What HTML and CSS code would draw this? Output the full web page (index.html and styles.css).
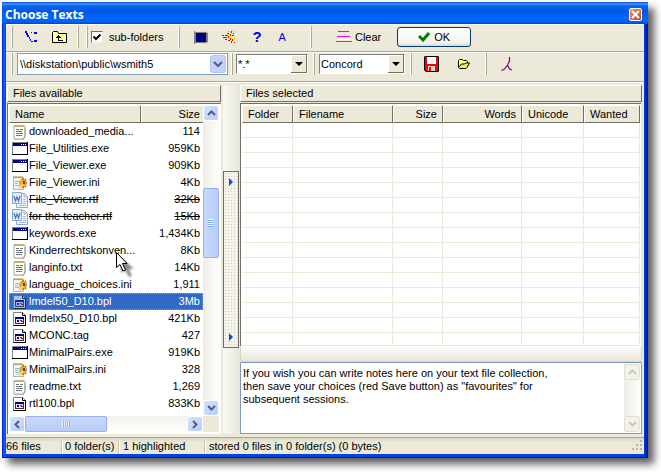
FILE: index.html
```html
<!DOCTYPE html>
<html lang="en">
<head>
    <meta charset="UTF-8">
    <title>Choose Texts</title>
    <link rel="stylesheet" href="styles.css">
</head>
<body>
<!-- shared icons -->
<svg class="defs" aria-hidden="true">
    <symbol id="i-txt" viewBox="0 0 16 16">
        <path d="M2 2h11v10l-2 3H2z" fill="#fffff4" stroke="#a8a89c"/>
        <path d="M13 4v9l-2 3H3" fill="none" stroke="#a8a08c"/>
        <path d="M3 1v2M5 1v2M7 1v2M9 1v2M11 1v2" stroke="#c08a10"/>
        <path d="M4 5.500h3M8 5.500h3M4 7.500h6M4 9.500h7M4 11.500h6" stroke="#6c7884"/>
    </symbol>
    <symbol id="i-ini" viewBox="0 0 16 16">
        <path d="M1.500 2.500h10v12h-10z" fill="#eef8fc" stroke="#a0b8c0"/>
        <path d="M2 1v2M4 1v2M6 1v2M8 1v2M10 1v2" stroke="#c08a10"/>
        <path d="M3 6.500h4M3 8.500h3M3 10.500h4" stroke="#80c0d8"/>
        <circle cx="11" cy="8" r="4" fill="#f0a828"/>
        <path d="M11 3v2M15 8h-1M11 13v-2M13 5l1-1M13 11l1 1" stroke="#c88010" stroke-width="2"/>
        <path d="M6 12l5-4 1 2-4 4z" fill="#f8d070"/>
        <path d="M11 6h2v3h-2z" fill="#384878"/>
    </symbol>
    <symbol id="i-exe" viewBox="0 0 16 16">
        <path d="M0 1h16v13H0z" fill="#848484"/>
        <path d="M1 2h14v11H1z" fill="#fff"/>
        <path d="M1 2h14v3H1z" fill="#000084"/>
        <path d="M9 3h1v1H9zM11 3h1v1h-1zM13 3h1v1h-1z" fill="#fff"/>
        <path d="M15 1h1v13H0v-1h15z" fill="#000"/>
    </symbol>
    <symbol id="i-rtf" viewBox="0 0 16 16">
        <path d="M4.500 1.500h8l3 3v11h-11z" fill="#f4f8ff" stroke="#90a8d0"/>
        <path d="M12 2v3h3" fill="none" stroke="#90a8d0"/>
        <path d="M11 7.500h3M11 9.500h3M11 11.500h3M7 13.500h7" stroke="#a0b8dc"/>
        <path d="M.5.500h9v11h-9z" fill="#e4eefc" stroke="#88a4d0"/>
        <path d="M2 4l1.500 5L5 5l1.500 4L8 4" fill="none" stroke="#4878b8" stroke-width="1.200"/>
    </symbol>
    <symbol id="i-bpl" viewBox="0 0 16 16">
        <path d="M1.500 1.500h9l3 3v10h-12z" fill="#fff" stroke="#808080"/>
        <path d="M10.500 1.500v3h3v10h-12" fill="none" stroke="#000"/>
        <path d="M3 6h9v7H3z" fill="#303030"/>
        <path d="M4 8h7v4H4z" fill="#e8e8e8"/>
        <path d="M3 6h9v2H3z" fill="#000084"/>
        <path d="M5 9h2v2H5z" fill="#0000f0"/>
        <path d="M8 9h2v1H8zM9 10h2v1H9z" fill="#e00000"/>
    </symbol>
    <symbol id="i-up" viewBox="0 0 9 6"><path d="M1 5l3.500-3.500L8 5" fill="none" stroke="currentColor" stroke-width="2"/></symbol>
    <symbol id="i-down" viewBox="0 0 9 6"><path d="M1 1l3.500 3.500L8 1" fill="none" stroke="currentColor" stroke-width="2"/></symbol>
    <symbol id="i-left" viewBox="0 0 6 9"><path d="M5 1L1.500 4.500 5 8" fill="none" stroke="currentColor" stroke-width="2"/></symbol>
    <symbol id="i-right" viewBox="0 0 6 9"><path d="M1 1l3.500 3.500L1 8" fill="none" stroke="currentColor" stroke-width="2"/></symbol>
    <symbol id="i-play" viewBox="0 0 4 8"><path d="M0 0l4 4-4 4z" fill="#0050e8"/></symbol>
</svg>

<div class="window">
    <div class="titlebar">
        <h1>Choose Texts</h1>
        <button class="close" aria-label="Close">
            <svg width="9" height="9" viewBox="0 0 9 9"><path d="M1 1l7 7M8 1L1 8" stroke="#fff" stroke-width="2"/></svg>
        </button>
    </div>

    <div class="client">
        <div class="toolbar top">
            <span class="sep"></span>
            <button class="tool drive" aria-label="Drives">
                <svg width="12" height="12" viewBox="0 0 12 12"><path d="M0 0h2v2H0zM1 2h2v2H1zM2 4h2v2H2zM4 6h1v2H4zM5 8h1v2H5zM6 10h2v1H6zM6 1h1v1H6zM9 1h3v2H9zM9 9h3v2H9z" fill="#0000ff"/></svg>
            </button>
            <button class="tool up" aria-label="Up one level">
                <svg width="16" height="14" viewBox="0 0 16 14"><path d="M.5 12.500v-10l1-1h4l1 2h8v9z" fill="#ffff99" stroke="#000"/><path d="M6 5h1v1h1v1h1v1H7v2h4v1H6V8H4V7h1V6h1z" fill="#000"/></svg>
            </button>
            <span class="sep"></span>
            <span class="sep second"></span>
            <label class="check"><input type="checkbox" checked>sub-folders</label>
            <span class="sep"></span>
            <button class="tool screen" aria-label="View">
                <svg width="14" height="13" viewBox="0 0 14 13"><path d="M0 0h14v13H0z" fill="#808080"/><path d="M1 0h13v1H1zM1 12h13v1H1zM13 0h1v2h-1zM13 11h1v2h-1z" fill="#ffff00"/><path d="M2 2h10v9H2z" fill="#000084"/></svg>
            </button>
            <button class="tool zap" aria-label="Stop">
                <svg width="14" height="14" viewBox="0 0 14 14"><path d="M6 4h4v3h2v3H8V8H6z" fill="#ffff00"/><path d="M0 5h2v1H0zM3 5h3v1H3zM5 3h2v1H5zM9 1h1v2H9zM11 3h1v1h-1zM1 7h4v1H1zM6 6h1v2H6zM3 9h2v1H3zM6 10h2v1H6zM8 8h1v2H8zM10 9h1v2h-1zM12 12h1v1h-1zM8 4h1v2H8zM10 5h2v1h-2zM9 11h1v2H9z" fill="#f00000"/><path d="M6 1h2v1H6zM11 1h1v1h-1zM12 7h1v3h-1z" fill="#e8d000"/></svg>
            </button>
            <button class="tool help" aria-label="Help">?</button>
            <button class="tool font" aria-label="Font">A</button>
            <span class="sep"></span>
            <button class="tool clear">
                <svg width="16" height="12" viewBox="0 0 16 12"><path d="M2 0h11v1H2zM1 5h13v1H1zM0 10h16v1H0z" fill="#ff00ff"/><path d="M1 8h13v1H1z" fill="#fff"/></svg>Clear
            </button>
            <button class="ok">
                <svg width="12" height="10" viewBox="0 0 12 10"><path d="M1 4l4 4 6-7" fill="none" stroke="#008000" stroke-width="3"/></svg>OK
            </button>
        </div>

        <div class="toolbar bottom">
            <span class="sep"></span>
            <select class="path" aria-label="Folder"><option>\\diskstation\public\wsmith5</option></select>
            <span class="sep"></span>
            <select class="combo filter" aria-label="File filter"><option>*.*</option></select>
            <span class="sep"></span>
            <select class="combo prog" aria-label="Tool"><option>Concord</option></select>
            <span class="sep"></span>
            <button class="tool save" aria-label="Save favourites">
                <svg width="15" height="16" viewBox="0 0 15 16"><path d="M1 0h13l1 1v14l-1 1H2l-2-2V1z" fill="#000"/><path d="M1 1h13v14H2l-1-1z" fill="#f00"/><path d="M3 1h9v7H3z" fill="#fff"/><path d="M4 10h7v5H4z" fill="#d8d8d0"/><path d="M5 11h2v4H5z" fill="#f00"/></svg>
            </button>
            <button class="tool open" aria-label="Open favourites">
                <svg width="12" height="10" viewBox="0 0 12 10"><path d="M.5 8.500v-7l1-1h3l1 1h3l1 1v2" fill="#ffff80" stroke="#000"/><path d="M.5 8.500L3.500 5h3l1-1h4L9 8.500l-1 1H1.500z" fill="#f0e860" stroke="#000"/></svg>
            </button>
            <span class="sep"></span>
            <button class="tool lambda" aria-label="Lemmas">
                <svg width="12" height="15" viewBox="0 0 12 15"><path d="M8.500 0v4l-2 4-3 4-3 1.500M6.500 8l2 4 2.500 1" fill="none" stroke="#800080" stroke-width="1.200"/></svg>
            </button>
        </div>

        <div class="main">
            <section class="available">
                <h2 class="caption">Files available</h2>
                <div class="list">
                    <table class="files">
                        <thead><tr><th>Name</th><th class="num">Size</th></tr></thead>
                        <tbody>
                            <tr><td><svg><use href="#i-txt"/></svg><span>downloaded_media...</span></td><td>114</td></tr>
                            <tr><td><svg><use href="#i-exe"/></svg><span>File_Utilities.exe</span></td><td>959Kb</td></tr>
                            <tr><td><svg><use href="#i-exe"/></svg><span>File_Viewer.exe</span></td><td>909Kb</td></tr>
                            <tr><td><svg><use href="#i-ini"/></svg><span>File_Viewer.ini</span></td><td>4Kb</td></tr>
                            <tr class="struck"><td><svg><use href="#i-rtf"/></svg><span>File_Viewer.rtf</span></td><td>32Kb</td></tr>
                            <tr class="struck"><td><svg><use href="#i-rtf"/></svg><span>for the teacher.rtf</span></td><td>15Kb</td></tr>
                            <tr><td><svg><use href="#i-exe"/></svg><span>keywords.exe</span></td><td>1,434Kb</td></tr>
                            <tr><td><svg><use href="#i-txt"/></svg><span>Kinderrechtskonven...</span></td><td>8Kb</td></tr>
                            <tr><td><svg><use href="#i-txt"/></svg><span>langinfo.txt</span></td><td>14Kb</td></tr>
                            <tr><td><svg><use href="#i-ini"/></svg><span>language_choices.ini</span></td><td>1,911</td></tr>
                            <tr class="selected"><td><svg><use href="#i-bpl"/></svg><span>lmdel50_D10.bpl</span></td><td>3Mb</td></tr>
                            <tr><td><svg><use href="#i-bpl"/></svg><span>lmdelx50_D10.bpl</span></td><td>421Kb</td></tr>
                            <tr><td><svg><use href="#i-bpl"/></svg><span>MCONC.tag</span></td><td>427</td></tr>
                            <tr><td><svg><use href="#i-exe"/></svg><span>MinimalPairs.exe</span></td><td>919Kb</td></tr>
                            <tr><td><svg><use href="#i-ini"/></svg><span>MinimalPairs.ini</span></td><td>328</td></tr>
                            <tr><td><svg><use href="#i-txt"/></svg><span>readme.txt</span></td><td>1,269</td></tr>
                            <tr><td><svg><use href="#i-bpl"/></svg><span>rtl100.bpl</span></td><td>833Kb</td></tr>
                        </tbody>
                    </table>
                    <div class="vscroll">
                        <button class="sb" aria-label="Scroll up"><svg width="9" height="6"><use href="#i-up"/></svg></button>
                        <div class="track"><div class="thumb"></div></div>
                        <button class="sb" aria-label="Scroll down"><svg width="9" height="6"><use href="#i-down"/></svg></button>
                    </div>
                    <div class="hscroll">
                        <button class="sb" aria-label="Scroll left"><svg width="6" height="9"><use href="#i-left"/></svg></button>
                        <div class="thumb"></div>
                        <button class="sb" aria-label="Scroll right"><svg width="6" height="9"><use href="#i-right"/></svg></button>
                    </div>
                    <div class="corner"></div>
                    <svg class="pointer" width="24" height="28" viewBox="0 0 24 28">
                        <path d="M6 6v16l4-3 4 7 3-1-3-7h5z" fill="#000"/>
                        <path d="M1.500 1.500v15l3.500-3 3 6.500 2.500-1-3-6.500H12z" fill="#fff" stroke="#000"/>
                    </svg>
                </div>
            </section>

            <div class="splitter">
                <button class="move" aria-label="Move to selected">
                    <svg width="4" height="8"><use href="#i-play"/></svg>
                    <svg width="4" height="8"><use href="#i-play"/></svg>
                </button>
            </div>

            <section class="chosen">
                <h2 class="caption">Files selected</h2>
                <div class="gridbox">
                    <table class="grid">
                        <thead><tr><th class="c1">Folder</th><th class="c2">Filename</th><th class="c3 num">Size</th><th class="c4 num">Words</th><th class="c5">Unicode</th><th>Wanted</th></tr></thead>
                        <tbody>
                            <tr><td></td><td></td><td></td><td></td><td></td><td></td></tr>
                            <tr><td></td><td></td><td></td><td></td><td></td><td></td></tr>
                            <tr><td></td><td></td><td></td><td></td><td></td><td></td></tr>
                            <tr><td></td><td></td><td></td><td></td><td></td><td></td></tr>
                            <tr><td></td><td></td><td></td><td></td><td></td><td></td></tr>
                            <tr><td></td><td></td><td></td><td></td><td></td><td></td></tr>
                            <tr><td></td><td></td><td></td><td></td><td></td><td></td></tr>
                            <tr><td></td><td></td><td></td><td></td><td></td><td></td></tr>
                            <tr><td></td><td></td><td></td><td></td><td></td><td></td></tr>
                            <tr><td></td><td></td><td></td><td></td><td></td><td></td></tr>
                            <tr><td></td><td></td><td></td><td></td><td></td><td></td></tr>
                            <tr><td></td><td></td><td></td><td></td><td></td><td></td></tr>
                            <tr><td></td><td></td><td></td><td></td><td></td><td></td></tr>
                            <tr><td></td><td></td><td></td><td></td><td></td><td></td></tr>
                            <tr class="last"><td></td><td></td><td></td><td></td><td></td><td></td></tr>
                        </tbody>
                    </table>
                </div>
                <div class="divider"></div>
                <div class="notes">
                    <textarea aria-label="Notes" rows="5">If you wish you can write notes here on your text file collection,
then save your choices (red Save button) as "favourites" for
subsequent sessions.</textarea>
                    <div class="vscroll off">
                        <button class="sb" aria-label="Scroll up" disabled><svg width="9" height="6"><use href="#i-up"/></svg></button>
                        <button class="sb" aria-label="Scroll down" disabled><svg width="9" height="6"><use href="#i-down"/></svg></button>
                    </div>
                </div>
            </section>
        </div>

        <div class="statusbar">
            <span class="s1">66 files</span>
            <span class="s2">0 folder(s)</span>
            <span class="s3">1 highlighted</span>
            <span class="s4">stored 0 files in 0 folder(s) (0 bytes)</span>
            <svg class="grip" width="12" height="12" viewBox="0 0 12 12"><path d="M8 0h2v2H8zM4 4h2v2H4zM8 4h2v2H8zM0 8h2v2H0zM4 8h2v2H4zM8 8h2v2H8z" fill="#b8b4a0"/></svg>
        </div>
    </div>
</div>
</body>
</html>
```
FILE: styles.css
```css
*{
    box-sizing: border-box;
    margin: 0;
    padding: 0;
}
body{
    background-color: #fff;
    padding: 2px 13px 14px 2px;
    font: 11px/13px "Liberation Sans", Arial, sans-serif;
    color: #000;
}
button, select, input, textarea{
    font: inherit;
    color: inherit;
}
svg{
    display: block;
    flex: none;
}
.defs{
    position: absolute;
    width: 0;
    height: 0;
}
.window{
    background: linear-gradient(to right, #0019cf 0, #1560f8 2px, #0045e0 4px, #0045e0 calc(100% - 4px), #0030d8 calc(100% - 3px), #001590 100%);
    padding: 0 4px 3px;
    border-bottom: 1px solid #00138c;
    box-shadow: 6px 6px 8px rgba(0, 0, 0, .65);
}
.titlebar{
    display: flex;
    align-items: center;
    justify-content: space-between;
    height: 22px;
    margin: 0 -4px;
    padding: 3px 6px 0 3px;
    background: linear-gradient(#0a52d8 0, #3c96ff 2px, #0a62ec 4px, #0058e6 9px, #0068fc 17px, #0060f4 20px, #0046c8 22px);
}
h1{
    font: bold 12px/16px "Open Sans", "Noto Sans", sans-serif;
    color: #fff;
}
.close{
    display: flex;
    align-items: center;
    justify-content: center;
    width: 13px;
    height: 13px;
    border: 1px solid #fff;
    border-radius: 2px;
    background: linear-gradient(135deg, #f09078, #d84018);
}
.client{
    background-color: #ece9d8;
}

/* toolbars */
.toolbar{
    display: flex;
    align-items: center;
    border-top: 1px solid #fff;
    border-bottom: 1px solid #aca899;
}
.toolbar.top{
    height: 28px;
    padding: 0 0 2px 5px;
}
.toolbar.bottom{
    height: 30px;
    padding: 0 0 6px 5px;
}
.sep{
    flex: none;
    width: 2px;
    height: 22px;
    border-left: 1px solid #fff;
    border-right: 1px solid #aca899;
}
.tool{
    display: flex;
    align-items: center;
    flex: none;
    border: 0;
    background: none;
}
.drive{
    margin-left: 12px;
}
.up{
    margin: 0 9px 0 15px;
}
.second{
    margin-left: 7px;
}
.check{
    display: flex;
    align-items: center;
    gap: 6px;
    margin: 0 15px 0 3px;
}
.check input{
    appearance: none;
    width: 12px;
    height: 12px;
    border: 1px solid;
    border-color: #716f64 #f1efe2 #f1efe2 #716f64;
    background: #fff url("data:image/svg+xml,%3Csvg xmlns='http://www.w3.org/2000/svg' viewBox='0 0 10 10'%3E%3Cpath d='M1.500 4.500l2.500 2.500 4.500-4.500' fill='none' stroke='%23000' stroke-width='2'/%3E%3C/svg%3E");
}
.screen{
    margin-left: 14px;
}
.zap{
    margin-left: 14px;
}
.help{
    margin-left: 16px;
    font: bold 15px/16px "Liberation Sans", Arial, sans-serif;
    color: #0000f0;
}
.font{
    margin: 0 24px 0 17px;
    color: #0000f0;
}
.clear{
    gap: 3px;
    margin: 0 16px 0 24px;
}
.ok{
    display: flex;
    align-items: center;
    justify-content: center;
    gap: 4px;
    width: 74px;
    height: 20px;
    border: 1px solid #003c74;
    border-radius: 3px;
    background: linear-gradient(#fff, #f4f3ee 80%, #dcd8cc);
}
.path{
    appearance: none;
    width: 211px;
    height: 22px;
    margin: 0 3px 0 4px;
    padding: 0 20px 0 2px;
    border: 1px solid #7f9db9;
    background: #fff url("data:image/svg+xml,%3Csvg xmlns='http://www.w3.org/2000/svg' viewBox='0 0 16 18'%3E%3Crect x='.5' y='.5' width='15' height='17' rx='2' fill='%23c3d3fd' stroke='%23b0c4f4'/%3E%3Cpath d='M4 7l4 4 4-4' fill='none' stroke='%234d6185' stroke-width='2'/%3E%3C/svg%3E") right 1px center / 16px 18px no-repeat;
}
.combo{
    appearance: none;
    height: 20px;
    padding: 0 18px 0 1px;
    border: 1px solid;
    border-color: #808080 #fff #fff #808080;
    background: #fff url("data:image/svg+xml,%3Csvg xmlns='http://www.w3.org/2000/svg' viewBox='0 0 16 18'%3E%3Cpath d='M0 0h16v18H0z' fill='%23716f64'/%3E%3Cpath d='M0 0h15v17H0z' fill='%23fff'/%3E%3Cpath d='M1 1h14v16H1z' fill='%23ece9d8'/%3E%3Cpath d='M4 7h8l-4 4z'/%3E%3C/svg%3E") right center / 16px 18px no-repeat;
}
.filter{
    width: 72px;
    margin: 0 5px 0 3px;
}
.prog{
    width: 86px;
    margin: 0 5px 0 4px;
}
.save{
    margin-left: 12px;
}
.open{
    margin: 0 15px 0 19px;
}
.lambda{
    margin-left: 14px;
}

/* panels */
.main{
    display: flex;
    padding: 2px 2px 3px 1px;
    border-top: 1px solid #fff;
    border-bottom: 1px solid #aca899;
}
.caption{
    height: 17px;
    padding: 1px 5px;
    border: 1px solid;
    border-color: #fff #716f64 #716f64 #fff;
    font-size: 11px;
    font-weight: normal;
}
.available{
    flex: none;
    display: flex;
    flex-direction: column;
    width: 214px;
}
.list{
    flex: 1;
    position: relative;
    display: grid;
    grid-template-columns: 1fr 16px;
    grid-template-rows: 1fr 16px;
    margin-top: 1px;
    padding: 1px 2px 2px 1px;
    border-top: 1px solid #716f64;
    border-left: 1px solid #716f64;
    background-color: #fff;
}
table{
    border-collapse: separate;
    border-spacing: 0;
    table-layout: fixed;
    width: 100%;
}
.files{
    align-self: start;
}
th{
    height: 18px;
    padding: 0 5px;
    border: 1px solid;
    border-color: #fff #716f64 #716f64 #fff;
    background-color: #ece9d8;
    font-weight: normal;
    text-align: left;
    white-space: nowrap;
}
th.num{
    text-align: right;
}
.files th.num{
    width: 62px;
    padding-right: 3px;
    border-right: 0;
}
.files td{
    height: 17px;
    white-space: nowrap;
}
.files td:first-child{
    display: flex;
    align-items: center;
    padding-left: 3px;
}
.files td svg{
    width: 16px;
    height: 16px;
}
.files td span{
    padding-left: 1px;
}
.files td:last-child{
    padding-right: 3px;
    text-align: right;
}
.struck{
    text-decoration: line-through;
}
.selected{
    background-color: #316ac5;
    color: #fff;
    outline: 1px dotted #ce953a;
    outline-offset: -1px;
}
.selected svg{
    opacity: .6;
}
.vscroll{
    display: flex;
    flex-direction: column;
    width: 16px;
    background: linear-gradient(to right, #eeede5, #fefefb);
}
.track{
    flex: 1;
    padding-top: 67px;
}
.sb{
    display: flex;
    align-items: center;
    justify-content: center;
    flex: none;
    width: 16px;
    height: 16px;
    border: 1px solid #fff;
    border-radius: 3px;
    background: linear-gradient(135deg, #d6e2fe, #b8ccfa);
    color: #4d6185;
}
.thumb{
    border: 1px solid #98b0e8;
    border-radius: 2px;
}
.vscroll .thumb{
    height: 70px;
    background: repeating-linear-gradient(#eef4fe 0 1px, #8cb0f8 1px 2px) center / 6px 8px no-repeat, linear-gradient(to right, #c9d8fc, #b8ccfa);
}
.hscroll{
    grid-column: 1;
    display: flex;
    background: linear-gradient(#f3f1ec, #fefefb);
}
.hscroll .thumb{
    width: 82px;
    margin-right: auto;
    background: repeating-linear-gradient(to right, #eef4fe 0 1px, #8cb0f8 1px 2px) center / 8px 6px no-repeat, linear-gradient(#c9d8fc, #b8ccfa);
}
.corner{
    background-color: #ece9d8;
}
.pointer{
    position: absolute;
    left: 107px;
    top: 147px;
}
.pointer path:first-child{
    opacity: .45;
    filter: blur(1px);
}
.splitter{
    flex: none;
    display: flex;
    align-items: flex-start;
    width: 16px;
    margin: 0 1px 0 2px;
    padding-top: 86px;
    border-radius: 3px;
    background: linear-gradient(to right, #fafaf6, #e8e6dc);
}
.move{
    display: flex;
    flex-direction: column;
    align-items: center;
    justify-content: space-between;
    width: 16px;
    height: 177px;
    padding: 6px 0;
    border: 1px solid #716f64;
    background: radial-gradient(#d0ccbc 1px, transparent 1px) 0 0 / 3px 3px #f4f3ec;
}
.chosen{
    flex: 1;
    min-width: 0;
    display: flex;
    flex-direction: column;
}
.gridbox{
    margin: 1px 1px 0 0;
    padding: 1px 1px 0 1px;
    border-top: 1px solid #716f64;
    border-left: 1px solid #716f64;
    background-color: #fff;
}
.c1{ width: 51px; }
.c2{ width: 100px; }
.c3{ width: 50px; }
.c4{ width: 79px; }
.c5{ width: 62px; }
.grid td{
    height: 15px;
    border-right: 1px solid #ece9d8;
    border-bottom: 1px solid #ece9d8;
}
.grid .last td{
    height: 13px;
}
.divider{
    height: 16px;
    border: 1px solid #d8d4c4;
    border-top-color: #fff;
    border-radius: 3px;
    background: linear-gradient(#fbfbf8, #e8e6dc);
}
.notes{
    flex: 1;
    display: flex;
    padding: 1px;
    border: 1px solid #7f9db9;
    background-color: #fff;
}
textarea{
    flex: 1;
    min-width: 0;
    padding: 3px 1px 0;
    border: 0;
    outline: 0;
    resize: none;
    overflow: hidden;
    background: none;
}
.off{
    justify-content: space-between;
}
.off .sb{
    border-color: #e0ded0;
    background: #f2f1ea;
    color: #c9c7ba;
}

/* status bar */
.statusbar{
    display: flex;
    align-items: center;
    height: 16px;
    background: linear-gradient(#d8d4c4, #ece9d8 4px);
}
.statusbar span{
    height: 15px;
    line-height: 15px;
    border-right: 1px solid #c8c4b4;
    box-shadow: 1px 0 #fff;
    white-space: nowrap;
}
.s1{ width: 56px; }
.s2{
    width: 57px;
    padding-left: 3px;
}
.s3{
    width: 86px;
    padding-left: 4px;
}
.statusbar .s4{
    flex: 1;
    padding-left: 4px;
    border: 0;
    box-shadow: none;
}
```
